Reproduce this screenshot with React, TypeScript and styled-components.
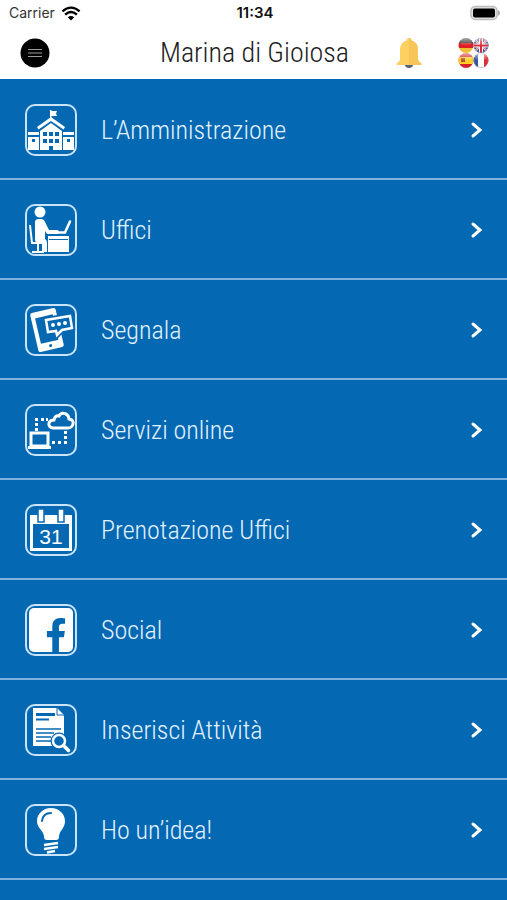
import React from "react";
import styled, { createGlobalStyle } from "styled-components";
import { FaFacebookF } from "react-icons/fa";

const BLUE = "#0568b2";

const GlobalStyle = createGlobalStyle`
  *, *::before, *::after { box-sizing: border-box; }
  body {
    margin: 0;
    background: ${BLUE};
    font-family: "Liberation Sans Narrow", "Roboto Condensed", "Roboto", sans-serif;
  }
`;

const Page = styled.div`
  min-height: 100vh;
  overflow-x: hidden;
  background: ${BLUE};
`;

const Header = styled.header`
  height: 79px;
  background: #fff;
  color: #1c1c1e;
`;

const StatusBar = styled.div`
  display: grid;
  grid-template-columns: 1fr auto 1fr;
  align-items: center;
  height: 26px;
  padding: 0 6px 0 9px;
  font-family: Inter, sans-serif;
  font-size: 14px;
  line-height: 16px;
`;

const Carrier = styled.span`
  display: flex;
  align-items: center;
  gap: 6px;
  color: #333;
`;

const Clock = styled.time`
  font-size: 15px;
  font-weight: 600;
  color: #111;
`;

const Battery = styled.span`
  display: flex;
  justify-self: end;
`;

const NavBar = styled.div`
  display: grid;
  grid-template-columns: 1fr auto 1fr;
  align-items: center;
  height: 53px;
  padding: 0 18px 0 20px;
`;

const Title = styled.h1`
  margin: 0;
  font-size: 28px;
  line-height: 36px;
  font-weight: 300;
`;

const Actions = styled.div`
  display: flex;
  justify-content: flex-end;
  gap: 36px;
`;

const IconButton = styled.button`
  display: flex;
  justify-self: start;
  padding: 0;
  border: 0;
  background: none;
  cursor: pointer;
`;

const Menu = styled.ul`
  margin: 0;
  padding: 1px 0 0;
  list-style: none;
`;

const MenuItem = styled.li`
  height: 100px;
  border-bottom: 2px solid #7fb2dc;
`;

const MenuLink = styled.a`
  display: flex;
  align-items: center;
  gap: 23px;
  height: 100%;
  padding: 2px 23px 0 24px;
  color: #e2f2ff;
  text-decoration: none;
`;

const Label = styled.span`
  flex: 1;
  font-size: 26px;
  line-height: 36px;
  font-weight: 300;
`;

function Tile({ children }: { children: React.ReactNode }) {
  return (
    <svg width="54" height="54" viewBox="-1 -1 54 54" fill="none" aria-hidden="true">
      <rect x="1" y="1" width="50" height="50" rx="9" stroke="#c9e4fa" strokeWidth="2" />
      {children}
    </svg>
  );
}

function TownHall() {
  return (
    <Tile>
      <g fill="#fff">
        <path d="M25 6h1.500v1H32l-1 2.500 1 2.500h-5.500v3H25z" />
        <path d="M12 23 26 13l14 10-1.500 2.500L26 17 13.500 25.500z" />
        <path d="M15 27 26 19l11 8V46H15z" />
        <path d="M3 28h11v3H3zM38 28h11v3H38zM3 33h11v13H3zM38 33h11v13H38z" />
      </g>
      <g fill={BLUE}>
        <path d="M18 28h4v4h-4zM24 28h4v4h-4zM30 28h4v4h-4zM18 35h4v4h-4zM24 35h4v4h-4zM30 35h4v4h-4zM24 42h4v4h-4z" />
        <path d="M7 35h3v3H7zM42 35h3v3h-3z" />
      </g>
    </Tile>
  );
}

function Desk() {
  return (
    <Tile>
      <circle cx="15" cy="8" r="5.500" fill="#fff" />
      <path d="M10 18q0-3 4-3h2q3 0 4 3l4 8h8q2 0 2 2t-2 2H22l-2-3v8q0 4-3 4h-4q-3 0-3-4z" fill="#fff" />
      <path d="M16 35h4q2 1 2 4v9h-5v-8z" fill="#fff" />
      <path d="M5 21l2 18h11M13 38v9M7 48h12" stroke="#fff" strokeWidth="2" />
      <path d="M32 28.500h8l5-11" stroke="#fff" strokeWidth="2.500" strokeLinecap="round" />
      <path d="M23 32h21v16H23z" fill="#fff" />
      <path d="M24 35.500h19" stroke={BLUE} strokeWidth="1" />
    </Tile>
  );
}

function Report() {
  return (
    <Tile>
      <g transform="rotate(-13 22 26)">
        <rect x="9" y="6" width="26" height="40" rx="2" fill="#fff" />
        <path d="M13 12h18v26H13z" fill={BLUE} />
        <circle cx="22" cy="42" r="1.500" fill={BLUE} />
      </g>
      <path d="m21 16 24-4 2 12-10 2-5 5-1-4-8 1z" fill={BLUE} stroke={BLUE} strokeWidth="6" />
      <path d="m21 16 24-4 2 12-10 2-5 5-1-4-8 1z" fill={BLUE} stroke="#fff" strokeWidth="2.500" />
      <g fill="#fff">
        <circle cx="28" cy="21" r="2" />
        <circle cx="34" cy="20" r="2" />
        <circle cx="40" cy="19" r="2" />
      </g>
    </Tile>
  );
}

function Cloud() {
  return (
    <Tile>
      <path d="M28 24q-5-1-4-5 1-3 5-3 1-5 5-4 2-4 7-2 3 2 3 5 5 1 4 5-1 4-5 4z" stroke="#fff" strokeWidth="3" />
      <path d="M6 29h17v13H6z" stroke="#fff" strokeWidth="3" />
      <path d="M3 43.500h23" stroke="#fff" strokeWidth="3" />
      <path
        d="M10 14h3v3h-3zM16 14h3v3h-3zM21 14h2v3h-2zM10 19h3v3h-3zM10 24h3v3h-3zM27 37h3v3h-3zM33 37h3v3h-3zM39 37h3v3h-3zM39 32h3v3h-3zM39 27h3v3h-3z"
        fill="#fff"
      />
    </Tile>
  );
}

function Calendar() {
  return (
    <Tile>
      <path d="M5 11h42v36H5z" fill="#fff" />
      <path d="M8 20h36v24H8z" fill={BLUE} />
      <rect x="13" y="5" width="6" height="13" fill="#fff" stroke={BLUE} strokeWidth="1.500" />
      <rect x="33" y="5" width="6" height="13" fill="#fff" stroke={BLUE} strokeWidth="1.500" />
      <text x="26" y="40" fill="#fff" fontFamily="Liberation Sans, sans-serif" fontSize="21" textAnchor="middle">31</text>
    </Tile>
  );
}

function Facebook() {
  return (
    <Tile>
      <rect x="4" y="4" width="44" height="44" rx="5" fill="#fff" />
      <FaFacebookF x="14" y="14" size={34} color={BLUE} />
    </Tile>
  );
}

function Document() {
  return (
    <Tile>
      <path d="M8 4h24l7 7v31H8z" fill="#fff" />
      <path d="M32 4v7h7" stroke={BLUE} strokeWidth="1" />
      <path d="M11 10.500h19" stroke={BLUE} strokeWidth="3" />
      <path d="M11 15.500h13" stroke={BLUE} strokeWidth="2" />
      <path d="M11 25h25M11 29h18M11 33h15M11 37h15" stroke={BLUE} strokeWidth="1.500" />
      <circle cx="34" cy="37" r="8.500" fill={BLUE} />
      <circle cx="34" cy="37" r="6" stroke="#fff" strokeWidth="2.500" />
      <path d="m38.500 41.500 5 5" stroke="#fff" strokeWidth="3.500" strokeLinecap="round" />
    </Tile>
  );
}

function Bulb() {
  return (
    <Tile>
      <path d="M26 4c8 0 14 6 14 13 0 7-5 9-6 15 0 3-1 4-3 4h-9c-2 0-3-1-3-4-1-6-7-8-7-15C12 10 18 4 26 4z" fill="#fff" />
      <path d="M17 17q1-8 9-8" stroke={BLUE} strokeWidth="2" strokeLinecap="round" />
      <path d="m19 41 14-2M19 45l14-2M22 48.500l8-1.500" stroke="#fff" strokeWidth="2.500" />
    </Tile>
  );
}

function Chevron() {
  return (
    <svg width="14" height="18" viewBox="0 0 14 18" fill="none" aria-hidden="true">
      <path d="m3 3 7 6-7 6" stroke="#fff" strokeWidth="3" strokeLinecap="round" />
    </svg>
  );
}

function Wifi() {
  return (
    <svg width="20" height="15" viewBox="0 0 18 14" fill="none" aria-hidden="true">
      <path d="M1 5q8-7 16 0M3.500 8q5.500-5 11 0" stroke="#000" strokeWidth="2.200" />
      <path d="M6 10.500q3-2.500 6 0L9 13.500z" fill="#000" />
    </svg>
  );
}

function BatteryIcon() {
  return (
    <svg width="31" height="16" viewBox="0 0 31 16" aria-hidden="true">
      <rect x="1" y="1.500" width="26" height="13" rx="4" fill="#e4e4e4" stroke="#bdbdbd" strokeWidth="1.500" />
      <rect x="3" y="3.500" width="22" height="9" rx="2" fill="#000" />
      <path d="M28 5q4 3 0 6z" fill="#aaa" />
    </svg>
  );
}

function BellIcon() {
  return (
    <svg width="26" height="30" viewBox="0 0 26 30" aria-hidden="true">
      <path d="M8 25h10q-1 5-5 5t-5-5z" fill="#596477" />
      <path d="M10.500 2.500q0-2.500 2.500-2.500t2.500 2.500q6.500 2 6.500 9v9q0 3 3 4.500 1 1 0 2H1q-1-1 0-2 3-1.500 3-4.500v-9q0-7 6.500-9z" fill="#fcd062" />
      <path d="M13 0q2.500 0 2.500 2.500 6.500 2 6.500 9v9q0 3 3 4.500 1 1 0 2H13z" fill="#f7c558" />
    </svg>
  );
}

function Flags() {
  return (
    <svg width="31" height="30" viewBox="0 0 31 30" aria-hidden="true">
      <defs>
        <clipPath id="de"><circle cx="8" cy="7.500" r="7.500" /></clipPath>
        <clipPath id="uk"><circle cx="23" cy="7.500" r="7.500" /></clipPath>
        <clipPath id="es"><circle cx="8" cy="22.500" r="7.500" /></clipPath>
        <clipPath id="fr"><circle cx="23" cy="22.500" r="7.500" /></clipPath>
        <linearGradient id="gloss" x1="0" y1="0" x2="0" y2="1">
          <stop offset="0" stopColor="#fff" stopOpacity="0.600" />
          <stop offset="1" stopColor="#fff" stopOpacity="0" />
        </linearGradient>
      </defs>
      <g clipPath="url(#de)">
        <path d="M0 0h16v5H0z" fill="#333" />
        <path d="M0 5h16v5H0z" fill="#dc1f25" />
        <path d="M0 10h16v5H0z" fill="#efbd36" />
      </g>
      <g clipPath="url(#uk)">
        <path d="M15 0h16v15H15z" fill="#344c91" />
        <path d="m15 0 16 15M31 0 15 15" stroke="#fff" strokeWidth="2" />
        <path d="m15 0 16 15M31 0 15 15" stroke="#d34452" strokeWidth="1" />
        <path d="M23 0v15M15 7.500h16" stroke="#fff" strokeWidth="4" />
        <path d="M23 0v15M15 7.500h16" stroke="#d8293b" strokeWidth="2" />
      </g>
      <g clipPath="url(#es)">
        <path d="M0 15h16v15H0z" fill="#d71f2b" />
        <path d="M0 19h16v7H0z" fill="#ffce28" />
        <path d="M3 20h4v4H3z" fill="#b75330" />
      </g>
      <g clipPath="url(#fr)">
        <path d="M15 15h16v15H15z" fill="#fff" />
        <path d="M15 15h5v15h-5z" fill="#3455a4" />
        <path d="M26 15h5v15h-5z" fill="#e02d38" />
      </g>
      <g fill="none" stroke="#8c8c99" strokeOpacity="0.500">
        <circle cx="23" cy="7.500" r="7" />
        <circle cx="23" cy="22.500" r="7" />
      </g>
      <g fill="url(#gloss)">
        <ellipse cx="8" cy="4" rx="6" ry="4" />
        <ellipse cx="23" cy="4" rx="6" ry="4" />
        <ellipse cx="8" cy="19" rx="6" ry="4" />
        <ellipse cx="23" cy="19" rx="6" ry="4" />
      </g>
    </svg>
  );
}

const items = [
  { label: "L’Amministrazione", Icon: TownHall },
  { label: "Uffici", Icon: Desk },
  { label: "Segnala", Icon: Report },
  { label: "Servizi online", Icon: Cloud },
  { label: "Prenotazione Uffici", Icon: Calendar },
  { label: "Social", Icon: Facebook },
  { label: "Inserisci Attività", Icon: Document },
  { label: "Ho un’idea!", Icon: Bulb },
];

export default function App() {
  return (
    <Page>
      <GlobalStyle />
      <Header>
        <StatusBar>
          <Carrier>Carrier <Wifi /></Carrier>
          <Clock>11:34</Clock>
          <Battery><BatteryIcon /></Battery>
        </StatusBar>
        <NavBar>
          <IconButton type="button" aria-label="Menu">
            <svg width="30" height="30" viewBox="0 0 30 30" aria-hidden="true">
              <circle cx="15" cy="15" r="14.500" fill="#000" />
              <path d="M8 11.500h14M8 15h14M8 18.500h14" stroke="#999" strokeWidth="1.200" />
            </svg>
          </IconButton>
          <Title>Marina di Gioiosa</Title>
          <Actions>
            <IconButton type="button" aria-label="Notifiche"><BellIcon /></IconButton>
            <IconButton type="button" aria-label="Lingua"><Flags /></IconButton>
          </Actions>
        </NavBar>
      </Header>
      <nav>
        <Menu>
          {items.map(({ label, Icon }) => (
            <MenuItem key={label}>
              <MenuLink href="#">
                <Icon />
                <Label>{label}</Label>
                <Chevron />
              </MenuLink>
            </MenuItem>
          ))}
        </Menu>
      </nav>
    </Page>
  );
}
